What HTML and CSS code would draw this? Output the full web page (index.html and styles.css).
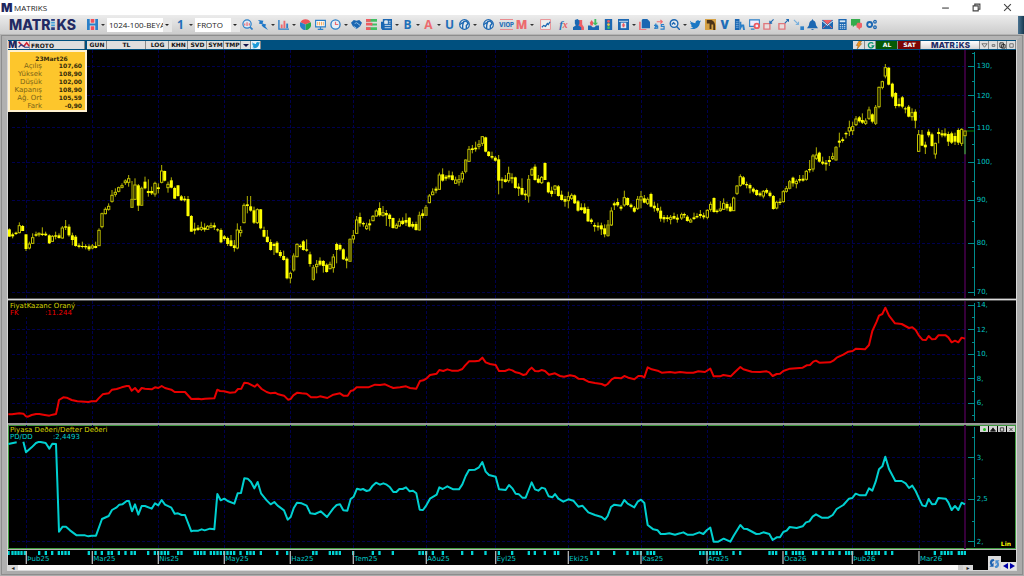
FILE: index.html
```html
<!DOCTYPE html>
<html lang="tr">
<head>
<meta charset="utf-8">
<title>MATRIKS</title>
<link rel="stylesheet" href="styles.css">
</head>
<body>
<svg class="defs" aria-hidden="true">
  <symbol id="dots" viewBox="0 0 4 12"><path fill="#2a3c80" d="M0 0h4v2H0z"/><path fill="#3d9fd8" d="M0 3h4v2H0zM0 6h4v2H0z"/><path fill="#2a3c80" d="M0 9h4v3H0z"/></symbol>
  <symbol id="save" viewBox="0 0 12 12"><path fill="#2a7fc8" d="M0 0h12v12H0z"/><path fill="#e8e8e8" d="M3 0h6v5H3zM3 7h6v5H3z"/><path fill="#f2505a" d="M4 0h4v4H4zM4 8h4v4H4z"/></symbol>
  <symbol id="search" viewBox="0 0 12 12"><circle cx="5.500" cy="5.500" r="4.500" fill="#dce9f5" stroke="#2a7fc8" stroke-width="1.300"/><path d="M3 7V5M5.500 7.500v-4M8 7V4.500" stroke="#ee6a70" stroke-width="1.300"/><path d="M8.800 8.800l2.700 2.700" stroke="#2a7fc8" stroke-width="1.800"/></symbol>
  <symbol id="bolt" viewBox="0 0 12 12"><path fill="#1f78c8" d="M1 1l6 1-1 3 4 1-1 2 3 4-5-3-2-2 1-1-4-1 1-2z"/></symbol>
  <symbol id="bars" viewBox="0 0 12 12"><path d="M1 1v10h11" fill="none" stroke="#2a7fc8" stroke-width="1.500"/><path fill="#ee6a70" d="M3 6h2v4H3zM6 2h2v8H6z"/><path fill="#2a7fc8" d="M9 5h2v5H9z"/></symbol>
  <symbol id="pie" viewBox="0 0 12 12"><path fill="#ef5358" d="M6 6L0.500 3.500A6 5.500 0 0 1 11.500 3.500z"/><path fill="#25a84c" d="M6 6l5.600-2.500A6 6 0 0 1 6 12z"/><path fill="#2a7fc8" d="M6 6v6A6 6 0 0 1 .4 3.500z"/></symbol>
  <symbol id="monitor" viewBox="0 0 12 12"><path d="M.7 1.500h10.600v7H.7zM3 11.300h6M6 8.500v3" fill="#fff" stroke="#2a7fc8" stroke-width="1.300"/><path d="M3 3v4M5 3v4M7 3v4M9 3v4" stroke="#f3a24a"/></symbol>
  <symbol id="clock" viewBox="0 0 12 12"><circle cx="6" cy="6" r="5" fill="#e7eef5" stroke="#2a7fc8" stroke-width="1.400"/><path d="M6 3v3h3" fill="none" stroke="#ee6a70" stroke-width="1.300"/></symbol>
  <symbol id="hands" viewBox="0 0 12 12"><path fill="#1b67b2" d="M0 4l3-3 3 1 3-1 3 3-2 4-4 3-4-3z"/><path d="M4 5l2-1 4 3M3 8l3 2" stroke="#9cc4e6" fill="none"/></symbol>
  <symbol id="rows" viewBox="0 0 12 12"><path fill="#3fbf62" d="M0 0h12v3H0zM5 5h7v2H5zM0 9h12v3H0z"/><path fill="#ee5a60" d="M0 0h5v3H0zM0 4h7v3H0zM0 9h5v3H0z"/></symbol>
  <symbol id="news" viewBox="0 0 12 12"><path fill="#1b67b2" d="M2 0h10v12H1.500L0 10V3h2z"/><path d="M4 2h3v3H4zM8.500 2.500h2M8.500 4.500h2M4 7h6.500M4 9.500h6.500" stroke="#dfe9f2" fill="#dfe9f2" stroke-width=".9"/></symbol>
  <symbol id="globe" viewBox="0 0 12 12"><circle cx="6" cy="6" r="5.300" fill="#e3e9ee" stroke="#1b67b2" stroke-width="1.300"/><path d="M4 11V7l1-4 3-1 2 3-2 2v4M1 6l3-2" fill="none" stroke="#1b67b2" stroke-width="1.500"/></symbol>
  <symbol id="linechart" viewBox="0 0 12 12"><path d="M.6.600h10.800v10.800H.6z" fill="#eee" stroke="#e98a8e"/><path d="M2 9l2-2 2 1 2-3 1 1 2-3" fill="none" stroke="#1b67b2" stroke-width="1.400"/></symbol>
  <symbol id="people" viewBox="0 0 12 12"><path fill="#ef5f64" d="M6 1h4v5l2 3v3H6z"/><path fill="#1b67b2" d="M2 1l3-1 2 2v3L6 7l3 2v3H0V9l3-2-1-2z"/></symbol>
  <symbol id="inbox" viewBox="0 0 12 12"><path fill="#1b67b2" d="M0 7h3l2 2h2l2-2h3v5H0z"/><path fill="#ee5a60" d="M2 4l2-3 2 3-1 3H3z"/><path fill="#3fbf62" d="M7 0h2v4h2L8 7 5 4h2z"/></symbol>
  <symbol id="traffic" viewBox="0 0 12 12"><path fill="#1b67b2" d="M2 0h8v12H2z"/><circle cx="6" cy="2.500" r="1.500" fill="#ee5a60"/><circle cx="6" cy="6" r="1.500" fill="#f5c542"/><circle cx="6" cy="9.500" r="1.500" fill="#3fbf62"/></symbol>
  <symbol id="window" viewBox="0 0 12 12"><path fill="#1b67b2" d="M0 0h12v12H0z"/><path d="M1 2.500h10" stroke="#dfe9f2"/><path fill="#dfe9f2" d="M3 4h6v6H3z"/><path fill="#ee5a60" d="M5 9V7H4l2-3 2 3H7v2z"/></symbol>
  <symbol id="docs" viewBox="0 0 12 12"><path fill="#1b67b2" d="M4 0h5l3 3v7H3V1z"/><path fill="#ee7a7e" d="M0 3h2v8h6v1H0z"/></symbol>
  <symbol id="swap" viewBox="0 0 12 12"><path d="M3 3h6M7 1l2 2-2 2" fill="none" stroke="#ee6a70" stroke-width="1.300"/><path d="M2 5v6M0 7h4M0 10h4V8H1M11 6H8v2h3v3H7" fill="none" stroke="#2a7fc8" stroke-width="1.300"/></symbol>
  <symbol id="find" viewBox="0 0 12 12"><circle cx="5.500" cy="5" r="4.200" fill="#e3e9ee" stroke="#1b67b2" stroke-width="1.500"/><path d="M8 8l4 4M3 6l2-2 2 2" fill="none" stroke="#1b67b2" stroke-width="1.500"/></symbol>
  <symbol id="bird" viewBox="0 0 12 12"><path fill="currentColor" d="M0 2c2 2 4 2.500 6 2.500C5.500 2 9 .3 10.300 2.200L12 1.700 10.800 4C10.500 9 5 12.500 0 10c1.500 0 3-.3 3.500-1C2 9 1.200 8 1 7h1.300C1 6 .2 5 .3 4l1.200.4C.5 3.500-.3 3 0 2z"/></symbol>
  <symbol id="film" viewBox="0 0 12 12"><path fill="#d6a144" d="M0 0h12v12H0z"/><path fill="#4b3419" d="M2 1h4c3 0 5 3 5 6v5H9V6H7v5H5V5H2z"/></symbol>
  <symbol id="report" viewBox="0 0 12 12"><path fill="#1b67b2" d="M1 0h5v12H1z"/><path d="M2 3h3M2 5h3M2 7h3M2 9h3" stroke="#9cc4e6" stroke-width=".7"/><path fill="#2a7fc8" d="M6 3h2v3h3l1 6h-2l-1-4-2 4H6z"/></symbol>
  <symbol id="screengear" viewBox="0 0 12 12"><path d="M.7 1h10.600v7H.7zM2 11h4" fill="#eef" stroke="#2a7fc8" stroke-width="1.200"/><circle cx="8.500" cy="7.500" r="2.500" fill="#eef" stroke="#ee5a60" stroke-width="2"/></symbol>
  <symbol id="shrink" viewBox="0 0 12 12"><path d="M1 5h6.500v6H1z" fill="#e8dede" stroke="#e0777c" stroke-width="1.500"/><path d="M11.500.500L7.500 4.500M7.500 2v2.500H10" fill="none" stroke="#1b67b2" stroke-width="1.200"/></symbol>
  <symbol id="grow" viewBox="0 0 12 12"><path d="M1 5h6.500v6H1z" fill="#e8dede" stroke="#e0777c" stroke-width="1.500"/><path d="M7.500 4.500l4-4M9 .6h2.400V3" fill="none" stroke="#1b67b2" stroke-width="1.200"/></symbol>
  <symbol id="dock" viewBox="0 0 12 12"><path d="M1 1l5 5M6 3v3H3" fill="none" stroke="#7ab0dc" stroke-width="1.200"/><path fill="#2a7fc8" d="M8 8h4v4H8z"/></symbol>
  <symbol id="bell" viewBox="0 0 12 12"><path fill="#1b67b2" d="M6 0l1 1.500C10 2.500 9.500 6 10 7l2 3H0l2-3c.500-1 0-4.500 3-5.500zM4 11h4l-2 1z"/></symbol>
  <symbol id="mail" viewBox="0 0 12 12"><path fill="#1b67b2" d="M0 1h12v10H0z"/><path fill="#ef5f64" d="M1 1h10L6 6z"/><path d="M0 2l6 5 6-5" fill="none" stroke="#fff"/><path d="M1 10l3-3M11 10L8 7" fill="none" stroke="#ef5f64"/></symbol>
  <symbol id="calc" viewBox="0 0 12 12"><path fill="#1b67b2" d="M1.500 0h9v12h-9z"/><path fill="#d9e8f4" d="M3 1.500h6v2H3z"/><path d="M3 6h1.500M5.300 6h1.500M7.600 6h1.500M3 8h1.500M5.300 8h1.500M7.600 8h1.500M3 10h1.500M5.300 10h1.500M7.600 10h1.500" stroke="#d9e8f4"/></symbol>
  <symbol id="chat" viewBox="0 0 12 12"><path fill="#35ab4c" d="M0 0h10v7H4L2 9V7H0z"/><path fill="#ef6268" d="M7 4h4l1 1v4l-2 1-1 2-1-2-2-1V6z"/></symbol>
  <symbol id="gears" viewBox="0 0 12 12"><g fill="none" stroke="#1b67b2"><circle cx="4" cy="6" r="2.700" stroke-width="2"/><circle cx="9.800" cy="3" r="1.400" stroke-width="1.400"/><circle cx="9.800" cy="9" r="1.400" stroke-width="1.400"/></g></symbol>
  <symbol id="flash" viewBox="0 0 8 9"><path fill="#f2981c" stroke="#8a5410" stroke-width=".5" d="M4 0h3L5 3h2L2 9l1-4H1z"/></symbol>
  <symbol id="reload" viewBox="0 0 8 9"><path fill="none" stroke="#0b9673" stroke-width="1.500" d="M6.500 3A3 3 0 1 0 7 5.500H4.500"/></symbol>
  <symbol id="sync" viewBox="0 0 12 12"><path fill="#1d62b0" d="M5 1C1 1 0 5 2 8L.5 9.500H5V5L3.500 6.500C3 4.500 4 3.500 6 3z"/><path fill="#4a8ed0" d="M7 11c4 0 5-4 3-7l1.500-1.500H7V7l1.500-1.500C9 7.500 8 8.500 6 9z"/></symbol>
</svg>

<header class="titlebar">
  <span class="mark">M</span>
  <span class="title">MATRIKS</span>
  <div class="winbuttons">
    <button aria-label="Minimize"><svg viewBox="0 0 8 8"><path d="M1 4.500h6"/></svg></button>
    <button aria-label="Restore"><svg viewBox="0 0 8 8"><path d="M1 2.500h4.500V7H1zM2.500 2.500V1H7v4.500H5.500"/></svg></button>
    <button aria-label="Close"><svg viewBox="0 0 8 8"><path d="M1 1l6 6M7 1L1 7"/></svg></button>
  </div>
</header>

<nav class="toolbar" aria-label="Araçlar">
  <span class="logo">MATR<svg><use href="#dots"/></svg>KS</span>
  <button class="tool" aria-label="Kaydet"><svg><use href="#save"/></svg></button><i class="caret"></i>
  <span class="combo wide"><select aria-label="Şablon"><option>1024-100-BEYAZ</option></select></span>
  <button class="tool one">1</button><i class="caret"></i>
  <span class="combo"><select aria-label="Sembol"><option>FROTO</option></select></span>
  <div class="tools" id="tools-main"></div>
  <div class="tools last" id="tools-last"></div>
  <button class="overflow" aria-label="Diğer"></button>
</nav>

<main class="frame">
  <section class="chartwin">
    <div class="chartbar">
      <span class="cell mk">M</span>
      <button class="cell pict" aria-label="Grafik tipi"><svg viewBox="0 0 13 9"><path fill="#f2e4e6" d="M0 0h13v9H0z"/><path d="M1 1l4 4 2 1 3-4 3 4" fill="none" stroke="#d02434" stroke-width="1.800"/><path d="M1 7l3-3 4 3h5" fill="none" stroke="#24408c" stroke-width="1.300"/></svg></button>
      <input class="cell symbol" aria-label="Sembol" value="FROTO">
      <button class="cell w20">GUN</button>
      <button class="cell w39">TL</button>
      <button class="cell w22">LOG</button>
      <button class="cell w19">KHN</button>
      <button class="cell w19">SVD</button>
      <button class="cell w17">SYM</button>
      <button class="cell w17">TMP</button>
      <button class="cell w10" aria-label="Menü"><i class="caret navy"></i></button>
      <button class="cell w10 tw" aria-label="Twitter"><svg><use href="#bird"/></svg></button>
      <span class="fill"></span>
      <button class="cell w12" aria-label="Hızlı emir"><svg><use href="#flash"/></svg></button>
      <button class="cell w11" aria-label="Yenile"><svg><use href="#reload"/></svg></button>
      <button class="cell buy">AL</button>
      <button class="cell sell">SAT</button>
      <span class="cell brand">MATR<svg><use href="#dots"/></svg>KS</span>
      <button class="cell mini" aria-label="Aşağı"><svg viewBox="0 0 8 8"><path d="M1 2h6L4 6z"/></svg></button>
      <button class="cell mini" aria-label="Küçült"><svg viewBox="0 0 8 8"><path d="M2.500 3h3v2h-3z"/></svg></button>
      <button class="cell mini" aria-label="Kopyala"><svg viewBox="0 0 8 8"><path d="M1 1h4v5H1zM3 3h4v4H3z" stroke="#222"/></svg></button>
      <button class="cell mini" aria-label="Büyüt"><svg viewBox="0 0 8 8"><path d="M2 2h4v4H2z"/></svg></button>
    </div>

    <div class="panel" id="price">
      <table class="quote">
        <caption>23Mart26</caption>
        <tr><th>Açılış</th><td>107,60</td></tr>
        <tr><th>Yüksek</th><td>108,90</td></tr>
        <tr><th>Düşük</th><td>102,00</td></tr>
        <tr><th>Kapanış</th><td>108,90</td></tr>
        <tr><th>Ağ. Ort</th><td>105,59</td></tr>
        <tr><th>Fark</th><td>-0,90</td></tr>
      </table>
    </div>
    <div class="divider"></div>
    <div class="panel" id="pe">
      <div class="legend"><b>FiyatKazanc Oraný</b><span class="red"><em>FK</em>:11.244</span></div>
    </div>
    <div class="divider thin"></div>
    <div class="panel active" id="pb">
      <div class="legend"><b>Piyasa Deðeri/Defter Deðeri</b><span class="cyan"><em>PD/DD</em>:2,4493</span></div>
      <div class="panelbuttons">
        <button aria-label="Durum"><i class="led"></i></button>
        <button aria-label="Yukarı"><svg viewBox="0 0 6 6"><path fill="#111" d="M0 5h6L3 1z"/></svg></button>
        <button aria-label="Büyüt"><svg viewBox="0 0 6 6"><path d="M1 1h4v4H1z"/></svg></button>
        <button aria-label="Kapat"><svg viewBox="0 0 6 6"><path d="M1 1l4 4M5 1L1 5"/></svg></button>
      </div>
      <span class="scale">Lin</span>
    </div>
    <div class="footer">
      <div class="timeaxis" id="time"></div>
      <div class="scroll">
        <button aria-label="Sola kaydır">◂</button><span class="track"></span><span class="thumb"></span><button aria-label="Sağa kaydır">▸</button>
      </div>
      <div class="corner">
        <button class="sync" aria-label="Eşitle"><svg><use href="#sync"/></svg></button>
        <span class="step"><button aria-label="Geri"><svg viewBox="0 0 5 6"><path d="M5 0v6L0 3z"/></svg></button><button aria-label="İleri"><svg viewBox="0 0 5 6"><path d="M0 0v6l5-3z"/></svg></button></span>
      </div>
    </div>
  </section>
</main>
<script src="chart.js"></script>
</body>
</html>
```
FILE: styles.css
```css
* { box-sizing: border-box; }
html, body { height: 100%; margin: 0; }
body {
  display: flex;
  flex-direction: column;
  overflow: hidden;
  background: #b8b8b8;
  font-family: "Open Sans", "Noto Sans", sans-serif;
  font-size: 8px;
  line-height: 1;
}
button, select, input {
  margin: 0;
  padding: 0;
  border: 0;
  border-radius: 0;
  background: none;
  font: inherit;
  color: inherit;
}
svg { display: block; }
.defs { position: absolute; width: 0; height: 0; }

.titlebar {
  display: flex;
  align-items: center;
  flex: none;
  height: 15px;
  padding-left: 1px;
  gap: 2px;
  background: #fff;
  color: #222;
}
.mark { width: 11px; font: 900 12px/1 Inter, sans-serif; color: #20265f; }
.winbuttons { display: flex; gap: 22px; margin-left: auto; padding-right: 12px; }
.winbuttons button { width: 9px; height: 9px; }
.winbuttons svg { width: 9px; height: 9px; fill: none; stroke: #444; stroke-width: 1; }

.toolbar {
  display: flex;
  align-items: center;
  flex: none;
  height: 19px;
  padding-left: 9px;
  background: linear-gradient(#ececec, #cccccc);
}
.logo {
  display: flex;
  align-items: center;
  width: 76px;
  font: 800 14px/1 Inter, sans-serif;
  color: #232a63;
}
.logo svg { width: 4px; height: 11px; margin: 0 1px; }
.tool { display: flex; align-items: center; justify-content: center; width: 15px; height: 15px; flex: none; color: #1b78c4; }
.tool svg { width: 11px; height: 11px; }
.tool.one, .tool.letter { font: 700 12px/1 "Open Sans", sans-serif; color: #1f6fb8; }
.tool.pink { color: #ec6a6e; }
.tool.red { color: #ec6a6e; font-weight: 800; }
.tool.heavy { font-weight: 800; }
.tool.viop { width: 13px; height: 11px; margin: 0 1px; border: solid #e98a8e; border-width: 1px 0; font: 800 6px/1 Inter, sans-serif; }
.tool.fx { font: italic 700 11px/1 "Liberation Serif", serif; }
.fx b { color: #ec5a5e; font-size: 10px; }
.caret {
  flex: none;
  width: 0;
  margin: 0 1px;
  border: 2px solid transparent;
  border-top-color: #333;
  border-bottom: 0;
}
.navy { border-width: 3px; border-top-color: #15154c; border-bottom: 0; }
.sep { width: 3px; flex: none; }
.sep.narrow { width: 1px; }
.combo {
  position: relative;
  width: 45px;
  height: 14px;
  margin-left: 1px;
  background: #fff;
}
.combo.wide { width: 65px; margin: 0 1px; }
.combo::after {
  content: "";
  position: absolute;
  right: 0;
  top: 0;
  width: 9px;
  height: 14px;
  background: #e6e6e6;
  pointer-events: none;
}
.combo::before {
  content: "";
  position: absolute;
  z-index: 1;
  right: 3px;
  top: 6px;
  border: 2px solid transparent;
  border-top-color: #222;
  border-bottom: 0;
  pointer-events: none;
}
.combo select { appearance: none; width: 100%; height: 14px; padding-left: 2px; color: #222; overflow: hidden; }
.tools { display: flex; align-items: center; }
.tools.last { width: 191px; }
.tools.last .tool { flex: 1; }
.overflow { width: 6px; height: 18px; margin-left: auto; background: linear-gradient(90deg, #4a7391, #16384f); }

.frame {
  flex: 1;
  min-height: 0;
  padding: 0 1px 1px;
  border-style: solid;
  border-width: 6px 7px 5px 7px;
  border-color: #b4b4b4 #aaaaaa #ababab #b0b0b0;
  background: #d8d8d8;
  outline: 1px solid #8d8d8d;
  outline-offset: -2px;
}
.chartwin {
  display: grid;
  grid-template-rows: 10px 248fr 3px 122fr 2px 124fr 21px;
  height: 100%;
  background: #000;
  font-family: "DejaVu Sans", sans-serif;
}
.chartbar {
  display: flex;
  padding: 1px 0;
  background: #00507f;
  font-size: 6px;
  font-weight: 700;
  color: #151515;
}
.cell {
  display: flex;
  align-items: center;
  justify-content: center;
  flex: none;
  height: 8px;
  background: #dedede;
  box-shadow: inset -1px 0 #8a8a8a;
}
.cell svg { width: 8px; height: 8px; }
.mk { width: 9px; font: 900 9px/8px Inter, sans-serif; color: #20265f; background: #f4f4f4; }
.pict { width: 13px; }
.cell.pict svg { width: 13px; }
.symbol { width: 55px; padding-left: 1px; margin-right: 2px; }
.w10 { width: 10px; } .w11 { width: 11px; } .w12 { width: 12px; }
.w17 { width: 17px; } .w19 { width: 19px; } .w20 { width: 20px; } .w22 { width: 23px; } .w39 { width: 39px; }
.tw { background: #e8f1f6; color: #1d9bd8; }
.fill { flex: 1; }
.buy { width: 22px; background: #065a06; color: #fff; }
.sell { width: 23px; background: #7c0505; color: #fff; }
.brand { width: 59px; background: linear-gradient(#fff, #d5d5d5); font: 800 8px/1 Inter, sans-serif; color: #232a63; }
.brand svg { width: 2px; height: 6px; margin: 0 1px; }
.mini { width: 9px; }
.mini svg { width: 7px; height: 7px; fill: none; stroke: #666; }

.divider { border: solid #555; border-width: 1px 0; background: #dcdcdc; }
.divider.thin { border: 0; background: #989898; }
.panel { position: relative; min-height: 0; overflow: hidden; }
.panel.active { outline: 1px solid #3f9a3f; outline-offset: -1px; }
.plot { position: absolute; width: 100%; height: 100%; left: 0; top: 0; }
.grid { stroke: #00004e; stroke-width: 3; stroke-dasharray: 9 6; fill: none; }
.axis { stroke: #008c8c; stroke-width: 3; fill: none; }
.axis.main { stroke-width: 4; }
.cursor { stroke: #36003a; stroke-width: 6; }
.wick { stroke: #b3b300; stroke-width: 3; fill: none; }
.solid { fill: #ffff00; }
.hollow { fill: #000; stroke: #c0c000; stroke-width: 3; }
.shade { fill: #555500; stroke: #a6a600; stroke-width: 3; }
.today { stroke: #356b35; stroke-width: 6; }
.mark-line { stroke: #008000; stroke-width: 3; }
.series { fill: none; stroke-width: 6; stroke-linejoin: round; }
.s-red { stroke: #e80000; }
.s-cyan { stroke: #00d0d0; }
.tick-label {
  position: absolute;
  left: 96%;
  padding-left: 1px;
  transform: translateY(-50%);
  font-size: 7px;
  color: #00c4c4;
}
.quote {
  position: absolute;
  display: block;
  left: 0;
  top: 0;
  width: 79px;
  padding: 2px 3px 0;
  border: 2px solid #fff1cf;
  border-spacing: 0;
  background: #fdc62c;
  color: #33290a;
}
.quote caption { display: block; padding: 1px 0 0 8px; font: 700 6px/7px "DejaVu Sans", sans-serif; text-align: center; }
.quote tbody { display: block; }
.quote tr { display: flex; height: 8px; align-items: center; }
.quote th { width: 29px; padding: 0; font-size: 7px; font-weight: 400; text-align: right; color: #7b6418; white-space: nowrap; }
.quote td { flex: 1; padding: 0; font-size: 6px; font-weight: 700; text-align: right; }
.legend { position: absolute; left: 2px; top: 2px; font-size: 7px; line-height: 7px; color: #d4d400; background: #000; }
.legend b { display: block; font-weight: 400; }
.legend span { display: flex; }
.legend em { width: 35px; font-style: normal; }
.legend .cyan { color: #00d4d4; }
.legend .cyan em { width: 43px; }
.legend .red { color: #f00000; }
.panelbuttons { position: absolute; right: 1px; top: 1px; display: flex; gap: 1px; }
.panelbuttons button { display: flex; align-items: center; justify-content: center; width: 8px; height: 6px; background: #d4d4d4; }
.panelbuttons svg { width: 6px; height: 5px; fill: none; stroke: #222; }
.led { width: 3px; height: 3px; border-radius: 50%; background: #1ec01e; }
.scale { position: absolute; right: 5px; bottom: 2px; font-size: 6px; font-weight: 700; color: #ffff00; }

.footer {
  display: grid;
  grid-template: 15px 6px / 1fr 43px;
  border-top: 1px solid #b5b5b5;
}
.timeaxis { position: relative; grid-column: 1 / 3; grid-row: 1; }
.event { fill: #00d4d4; }
.month-line { stroke: #b0b0b0; stroke-width: 4; }
.month { position: absolute; top: 6px; padding-left: 1px; font-size: 7px; color: #00c8c8; }
.scroll { display: flex; grid-column: 1; grid-row: 2; height: 5px; background: #fafafa; }
.scroll button { display: flex; align-items: center; justify-content: center; width: 10px; height: 5px; background: #d8d8d8; font-size: 6px; color: #222; }
.track { flex: 1; }
.thumb { width: 5px; background: #ccc; }
.corner { position: relative; display: flex; align-items: flex-end; grid-column: 2; grid-row: 1 / 3; padding: 5px 0 1px 15px; }
.sync { width: 13px; height: 14px; padding: 1px; background: #dcdcdc; }
.sync svg { width: 11px; height: 11px; }
.step { display: flex; gap: 2px; flex: 1; height: 8px; padding: 1px; justify-content: center; background: #e4e4e4; }
.step svg { width: 5px; height: 6px; fill: #0000a8; }
```
FILE: chart.js
```js
const NS = "http://www.w3.org/2000/svg";

/* Toolbar entries: icon id, "=text:class" for lettered tools, "v" caret, "|" and "." spacers */
const MAIN = "search bolt v bars v . pie monitor clock v hands rows news v =B v =A:pink v =U globe v | globe | =VIOP:viop =M:red v | linechart | =fx people inbox traffic window v docs swap find v";
const LAST = "bird film =V:heavy report screengear shrink grow dock bell mail calc chat gears";

function fillTools(id, spec) {
  const host = document.getElementById(id);
  host.innerHTML = spec.split(" ").map(t => {
    if (t === "v") return '<i class="caret"></i>';
    if (t === "|") return '<span class="sep"></span>';
    if (t === ".") return '<span class="sep narrow"></span>';
    if (t === "=fx") return '<button class="tool letter fx">f<b>x</b></button>';
    if (t[0] === "=") {
      const [text, cls = ""] = t.slice(1).split(":");
      return `<button class="tool letter ${cls}">${text}</button>`;
    }
    return `<button class="tool" aria-label="${t}"><svg><use href="#${t}"/></svg></button>`;
  }).join("");
}
fillTools("tools-main", MAIN);
fillTools("tools-last", LAST);

/* Plot units: three per pixel at the base window size. */
const LEFT = 24, WIDTH = 3024, AXIS = 2923, NOW = 2895;
const MONTHS = [["Þub25", 79], ["Mar25", 277], ["Nis25", 475], ["May25", 673], ["Haz25", 871], ["Tem25", 1060],
  ["Aðu25", 1279], ["Eyl25", 1487], ["Eki25", 1705], ["Kas25", 1923], ["Ara25", 2121], ["Oca26", 2349],
  ["Þub26", 2557], ["Mar26", 2757]];

/* x, high, body top, body bottom, low, kind (s solid, h hollow, d shaded) */
const CANDLES = `28 325 328 350 350 s;38 338 343 349 355 s;48 335 338 342 345 s;58 307 317 338 340 h;68 315 318 333 333 s;78 343 343 387 393 s;88 365 372 384 388 h;98 340 353 370 372 h;108 335 343 347 350 s;117 337 340 344 350 h;127 322 341 345 348 s;137 335 341 346 348 s;148 343 346 370 372 s;157 345 349 364 366 h;167 335 346 350 358 s;177 340 346 354 356 s;187 318 324 354 356 h;197 300 319 323 330 s;207 313 320 346 350 s;217 338 346 360 376 s;227 345 350 378 380 s;237 370 376 381 385 s;247 365 378 381 385 s;257 373 378 382 388 s;267 373 379 388 393 s;277 372 378 384 388 h;287 365 378 384 385 s;297 325 331 377 378 h;306 278 281 320 325 h;316 262 268 281 283 h;326 250 259 268 272 h;336 210 226 244 248 h;346 205 217 223 230 h;356 200 203 214 217 h;366 190 197 202 205 h;376 178 183 188 195 h;386 165 176 187 200 h;396 183 238 262 264 d;405 175 195 238 240 h;415 192 196 257 273 s;425 200 205 256 258 d;435 170 185 205 208 s;445 178 213 219 230 s;455 200 213 220 225 s;465 185 190 222 230 h;475 190 202 207 220 s;485 135 153 187 190 h;494 152 153 182 184 s;504 185 193 203 218 h;514 172 181 203 205 s;524 200 204 236 236 s;534 195 196 228 230 s;544 225 229 241 243 s;554 228 236 241 245 s;564 228 237 288 290 s;574 285 288 335 335 s;584 308 326 332 343 s;594 315 323 330 333 s;604 305 322 328 333 h;614 310 323 329 335 s;623 315 319 328 330 h;633 308 317 322 325 h;643 308 316 322 330 s;653 325 328 331 335 s;663 325 330 367 370 s;673 345 349 357 362 s;683 350 354 372 378 s;693 345 361 378 380 s;703 360 376 384 395 s;712 310 330 384 388 h;722 318 331 338 350 h;732 250 256 308 310 h;742 228 253 258 280 s;752 228 259 272 275 s;762 260 271 308 312 s;772 265 269 308 312 h;782 267 268 325 328 s;792 320 330 350 352 s;802 330 350 366 368 s;812 358 366 390 392 s;822 368 372 378 405 s;831 363 368 398 400 s;841 390 396 408 413 s;851 392 408 420 422 s;861 412 416 475 478 s;871 455 460 474 490 h;881 400 408 450 455 d;891 370 373 410 412 h;901 372 377 381 385 s;910 360 364 390 392 s;920 358 388 392 395 s;930 395 403 432 440 s;940 435 443 478 482 d;950 420 433 440 460 h;960 412 422 434 438 s;970 420 423 438 458 s;980 430 434 456 458 s;990 425 433 446 448 h;1000 402 411 443 458 h;1010 368 372 390 430 s;1020 370 375 388 392 s;1030 385 388 418 420 s;1040 410 416 422 445 s;1050 355 358 424 426 d;1060 330 347 357 370 h;1070 288 300 340 342 h;1080 278 291 310 320 s;1090 305 309 313 320 s;1100 308 318 326 330 h;1109 298 310 316 332 s;1119 285 289 302 304 h;1129 268 273 288 290 h;1139 247 264 286 290 s;1149 258 278 286 290 h;1159 270 279 286 318 s;1169 280 284 297 320 s;1179 293 294 324 326 s;1189 310 316 324 326 h;1198 295 304 318 320 h;1208 292 302 312 315 s;1218 280 300 308 318 s;1228 292 293 320 322 s;1238 305 312 320 325 s;1248 305 312 330 332 s;1258 275 286 330 332 d;1268 268 280 288 295 s;1278 255 262 286 288 d;1288 222 228 248 250 h;1298 205 216 224 226 h;1308 200 206 212 220 s;1318 158 165 208 210 h;1328 145 163 182 185 s;1338 165 170 176 182 s;1347 152 166 172 178 s;1357 155 166 180 182 s;1367 170 180 190 192 h;1377 165 179 186 197 h;1387 153 160 177 188 h;1397 118 120 154 160 d;1407 78 88 124 126 h;1417 75 85 90 100 s;1427 65 83 88 95 s;1437 60 73 79 88 h;1447 48 50 70 78 h;1457 50 52 95 97 s;1466 93 95 108 110 s;1476 95 108 113 118 s;1486 108 113 122 125 s;1496 105 118 182 223 s;1506 172 178 182 205 s;1516 165 178 186 188 s;1526 140 160 182 188 h;1536 160 172 176 190 s;1546 170 172 204 206 s;1556 190 200 206 228 s;1566 175 204 224 226 s;1576 210 221 226 240 s;1586 165 178 228 248 d;1596 143 148 165 168 h;1605 133 140 180 182 s;1615 165 176 188 190 s;1625 168 172 188 192 h;1635 127 129 180 180 s;1645 185 187 217 220 s;1655 200 212 222 230 s;1665 195 198 208 222 h;1675 195 199 228 230 s;1685 212 224 240 242 s;1695 228 237 245 260 s;1705 215 230 242 265 h;1715 220 226 235 240 h;1724 223 226 250 252 s;1734 240 244 272 275 s;1744 250 262 270 272 s;1754 250 262 280 282 s;1764 260 267 304 306 s;1774 295 299 306 312 s;1784 308 315 320 335 s;1794 307 317 322 332 s;1804 308 316 328 345 s;1814 313 325 343 352 s;1824 300 315 347 350 d;1834 262 273 315 318 h;1843 245 250 256 270 s;1853 235 246 256 260 s;1863 255 260 266 272 s;1873 212 233 255 260 h;1883 232 234 255 258 s;1893 250 254 261 265 s;1903 258 263 275 278 s;1913 228 238 265 270 h;1923 213 230 240 265 h;1933 225 235 248 250 s;1943 232 238 250 255 h;1953 218 222 260 262 s;1963 245 257 265 275 s;1973 250 264 272 278 s;1982 260 272 296 305 s;1992 285 291 298 308 s;2002 285 292 297 305 s;2012 285 292 298 313 h;2022 278 288 296 298 s;2032 283 293 299 308 s;2045 278 284 294 300 h;2053 278 282 286 294 s;2062 285 290 303 305 s;2072 295 300 306 308 h;2082 278 292 297 300 s;2091 280 288 292 295 s;2101 270 282 288 295 s;2111 278 286 292 298 s;2122 268 271 292 298 h;2132 245 253 268 275 h;2142 232 234 276 278 s;2151 268 272 276 280 s;2161 243 267 272 275 h;2171 235 250 268 270 h;2181 245 252 265 272 s;2191 250 260 274 275 s;2201 230 234 272 273 h;2211 195 198 220 225 h;2221 163 170 196 200 h;2230 168 172 193 195 s;2240 185 192 196 205 s;2250 190 195 205 220 s;2260 202 206 215 220 s;2270 208 210 225 228 s;2280 215 220 226 230 s;2290 210 214 228 235 h;2300 205 210 218 222 s;2310 212 218 228 232 s;2320 225 228 267 269 s;2330 242 247 264 268 h;2340 235 245 249 255 s;2350 210 215 245 248 h;2359 198 206 214 218 h;2369 180 185 205 208 d;2379 170 173 190 200 s;2389 178 184 191 205 h;2399 165 177 182 188 s;2409 165 176 182 185 s;2419 150 154 178 182 h;2429 120 147 151 158 s;2439 102 108 147 155 h;2449 82 105 115 120 h;2458 95 98 125 128 s;2468 110 125 131 135 s;2478 120 128 133 152 s;2488 108 120 126 138 s;2498 98 110 116 120 h;2508 78 82 120 122 d;2518 38 62 68 82 s;2528 52 58 63 68 s;2538 35 39 43 55 s;2548 2 23 33 48 h;2558 5 20 32 45 h;2568 -12 -3 14 18 h;2578 -12 -8 4 8 s;2587 -20 0 8 12 s;2597 -5 3 10 15 h;2607 -40 -30 -5 0 h;2617 -20 -17 5 10 s;2627 -45 -38 10 15 d;2637 -100 -98 -40 -35 h;2647 -118 -115 -98 -92 h;2656 -168 -157 -132 -125 h;2666 -158 -157 -106 -104 s;2677 -112 -109 -70 -65 s;2687 -84 -81 -42 -35 s;2697 -65 -48 -42 -38 s;2707 -72 -68 -40 -35 s;2716 -40 -35 -32 -20 s;2726 -45 -40 -10 -8 s;2736 -35 -22 -10 2 h;2746 -32 -25 2 25 s;2756 30 44 94 96 h;2766 30 44 77 78 s;2776 65 74 82 102 s;2786 28 35 46 52 s;2796 38 43 78 80 s;2806 68 70 102 116 h;2816 25 36 42 70 s;2826 30 40 46 52 s;2835 25 40 47 52 s;2845 35 42 65 78 s;2855 35 40 68 72 s;2865 38 48 65 75 s;2875 25 30 68 75 s;2885 25 28 70 78 h;2895 33 33 47 48 h`
  .split(";").map(r => r.split(" "));

const PE = "25,358 36,358 58,355 70,356 78,364 84,365 95,360 108,357 118,357 130,359 148,362 158,359 168,357 172,340 177,315 190,307 200,308 215,315 232,319 255,320 265,321 275,319 288,319 296,310 308,298 326,295 336,284 350,282 365,277 380,273 387,273 395,287 405,279 415,291 425,279 435,281 455,283 465,277 475,279 485,273 495,279 514,284 524,291 555,291 574,312 595,311 604,313 615,311 643,310 652,284 660,288 672,289 690,293 705,292 714,282 724,281 733,263 745,265 764,275 772,268 785,282 800,291 812,295 825,293 835,298 852,302 864,314 872,312 880,301 892,293 905,295 920,296 933,307 950,307 960,304 982,309 1000,299 1020,295 1030,302 1043,302 1052,288 1060,286 1070,277 1105,277 1125,269 1140,270 1155,268 1170,275 1180,279 1200,277 1218,274 1230,279 1249,281 1260,258 1270,256 1280,250 1290,240 1310,236 1318,225 1330,228 1342,223 1355,227 1375,227 1387,222 1395,212 1407,199 1425,199 1437,197 1447,188 1457,202 1470,207 1487,210 1497,228 1515,228 1527,223 1537,226 1547,232 1560,235 1570,240 1578,238 1587,225 1595,218 1605,228 1615,229 1625,225 1635,228 1647,239 1665,235 1680,243 1692,245 1710,241 1725,244 1735,251 1750,252 1765,260 1785,264 1805,267 1815,272 1823,267 1835,253 1845,248 1863,250 1873,243 1885,248 1903,253 1915,243 1925,243 1933,247 1943,217 1955,223 1973,227 1985,233 2010,231 2025,233 2040,231 2060,233 2080,233 2095,229 2115,231 2131,221 2141,244 2160,244 2170,240 2192,244 2205,231 2221,216 2230,223 2255,230 2280,231 2300,229 2308,232 2318,243 2330,237 2340,236 2350,228 2370,221 2408,218 2420,211 2430,210 2440,200 2448,197 2458,203 2490,202 2500,197 2510,188 2530,179 2545,170 2558,168 2568,161 2595,163 2607,150 2617,108 2630,80 2637,62 2647,57 2656,38 2667,62 2685,85 2705,87 2727,99 2737,97 2747,105 2757,122 2767,134 2778,135 2786,123 2796,133 2806,132 2815,121 2837,121 2845,127 2855,142 2865,137 2875,142 2885,128 2895,131";
const PB = ["25,447 50,442", "70,440 78,472 95,457 108,444 118,440 137,444 148,461 157,446 168,447 172,560 177,710 188,695 198,695 210,706 230,721 255,721 265,724 275,722 288,722 306,672 326,663 336,645 350,637 358,629 367,628 380,618 387,618 396,649 405,628 415,659 425,633 435,633 455,641 465,625 475,631 485,615 495,629 514,638 524,656 534,655 545,660 555,660 574,709 580,707 595,707 605,703 614,706 630,701 643,703 652,597 662,616 673,611 683,618 703,626 713,595 723,594 733,550 743,551 753,561 763,580 773,561 783,595 800,616 812,628 823,621 833,632 852,646 863,674 872,666 881,640 891,623 905,625 920,632 931,655 945,657 962,649 981,666 1000,640 1010,630 1020,628 1030,646 1042,647 1052,612 1061,605 1071,581 1082,584 1089,582 1100,588 1108,586 1118,572 1128,563 1140,569 1150,565 1160,569 1170,577 1180,591 1189,591 1198,582 1208,582 1218,577 1229,589 1239,587 1249,595 1259,644 1269,645 1279,631 1290,611 1310,599 1318,577 1328,582 1342,574 1360,583 1377,583 1387,568 1397,543 1407,525 1425,524 1437,517 1447,501 1457,530 1467,540 1487,545 1497,583 1517,585 1527,570 1537,580 1547,596 1557,598 1567,608 1577,608 1586,585 1595,562 1605,583 1615,587 1625,578 1635,581 1646,604 1657,607 1665,597 1675,611 1690,620 1705,613 1720,617 1735,635 1747,632 1765,652 1785,660 1805,666 1815,674 1823,663 1833,636 1843,629 1863,632 1873,615 1883,626 1903,637 1913,620 1923,614 1933,624 1943,690 1960,703 1973,706 1982,717 1995,717 2008,715 2025,719 2040,715 2050,712 2062,719 2080,719 2098,712 2110,717 2121,705 2131,698 2141,740 2155,740 2171,731 2191,740 2201,722 2221,690 2231,701 2241,702 2269,717 2280,716 2290,712 2308,717 2318,735 2330,727 2340,727 2350,711 2360,707 2369,696 2390,699 2408,694 2418,682 2428,679 2438,665 2448,658 2465,668 2485,668 2498,660 2510,642 2530,630 2547,611 2557,609 2567,596 2580,601 2597,601 2607,580 2617,587 2627,560 2637,523 2647,514 2656,485 2667,522 2686,558 2705,558 2717,565 2727,579 2737,572 2747,588 2757,610 2767,631 2777,634 2786,612 2796,628 2806,627 2815,609 2837,611 2845,622 2855,645 2865,633 2875,645 2885,623 2895,628"];
const EVENTS = [26, 38, 47, 56, 65, 75, 118, 138, 157, 177, 187, 197, 207, 267, 287, 306, 326, 336, 357, 377, 395, 405, 445, 465, 475, 485, 495, 505, 535, 545, 585, 594, 604, 614, 633, 643, 653, 663, 673, 683, 693, 703, 722, 742, 752, 762, 783, 832, 862, 940, 950, 990, 1000, 1010, 1020, 1060, 1119, 1139, 1179, 1259, 1269, 1279, 1299, 1329, 1387, 1417, 1457, 1497, 1537, 1587, 1605, 1635, 1665, 1675, 1775, 1795, 1843, 1883, 1903, 1913, 1923, 1943, 1953, 1963, 2101, 2111, 2121, 2131, 2141, 2151, 2161, 2201, 2221, 2309, 2319, 2329, 2359, 2379, 2389, 2399, 2409, 2440, 2449, 2469, 2489, 2499, 2519, 2539, 2548, 2557, 2598, 2607, 2617, 2627, 2637, 2657, 2677, 2805, 2825, 2835, 2845, 2855, 2877, 2886, 2895];

function plot(host, top, height, body) {
  const svg = document.createElementNS(NS, "svg");
  svg.setAttribute("class", "plot");
  svg.setAttribute("viewBox", `${LEFT} ${top} ${WIDTH} ${height}`);
  svg.setAttribute("preserveAspectRatio", "none");
  svg.innerHTML = body;
  host.prepend(svg);
}

function panel(id, top, height, major, minor, body) {
  const host = document.getElementById(id);
  const bottom = top + height;
  const line = (cls, d) => `<path class="${cls}" shape-rendering="crispEdges" d="${d}"/>`;
  let s = line("grid", MONTHS.map(m => `M${m[1]} ${top}V${bottom}`).join("") + major.map(m => `M36 ${m[1]}H${NOW}`).join(""));
  s += line("cursor", `M${NOW} ${top}V${bottom}`);
  s += line("axis main", `M${AXIS} ${top + 6}V${bottom - 6}`);
  s += line("axis", major.map(m => `M${AXIS - 18} ${m[1]}h20`).join("") + minor.map(y => `M${AXIS - 8} ${y}h8`).join(""));
  plot(host, top, height, s + body);
  for (const [text, y] of major) {
    const el = document.createElement("span");
    el.className = "tick-label";
    el.textContent = text;
    el.style.top = (y - top) / height * 100 + "%";
    host.append(el);
  }
}

const KIND = { s: "solid", h: "hollow", d: "shade" };
const candles = CANDLES.map(([x, hi, a, b, lo, k]) => {
  const w = k === "s" ? 9 : 7, h = Math.max(b - a, k === "s" ? 3 : 4);
  return `<path class="wick" d="M${x} ${hi}V${lo}"/><rect class="${KIND[k]}" x="${x - w / 2}" y="${a}" width="${w}" height="${h}"/>`;
}).join("");

panel("price", -210, 744,
  [["130,", -161], ["120,", -73], ["110,", 23], ["100,", 127], ["90,", 241], ["80,", 370], ["70,", 517]],
  [-201, -117, -27, 73, 183, 305, 441],
  `<path class="today" d="M${NOW} 48V103"/><path class="mark-line" d="M${NOW + 5} 33h22"/>` + candles);
panel("pe", 18, 366, [["14,", 31], ["12,", 104], ["10,", 178], ["8,", 251], ["6,", 324]], [68, 141, 214, 288, 361],
  `<polyline class="series s-red" points="${PE}"/>`);
panel("pb", 390, 372, [["3,", 488], ["2,5", 613], ["2,", 740]], [426, 551, 678],
  PB.map(p => `<polyline class="series s-cyan" points="${p}"/>`).join(""));

const time = document.getElementById("time");
plot(time, 0, 45,
  EVENTS.map(x => `<rect class="event" x="${x - 4}" y="3" width="7" height="12"/>`).join("") +
  MONTHS.map(m => `<path class="month-line" d="M${m[1]} 3V42"/>`).join(""));
for (const [text, x] of MONTHS) {
  const el = document.createElement("span");
  el.className = "month";
  el.textContent = text;
  el.style.left = (x - LEFT) / WIDTH * 100 + "%";
  time.append(el);
}
```
